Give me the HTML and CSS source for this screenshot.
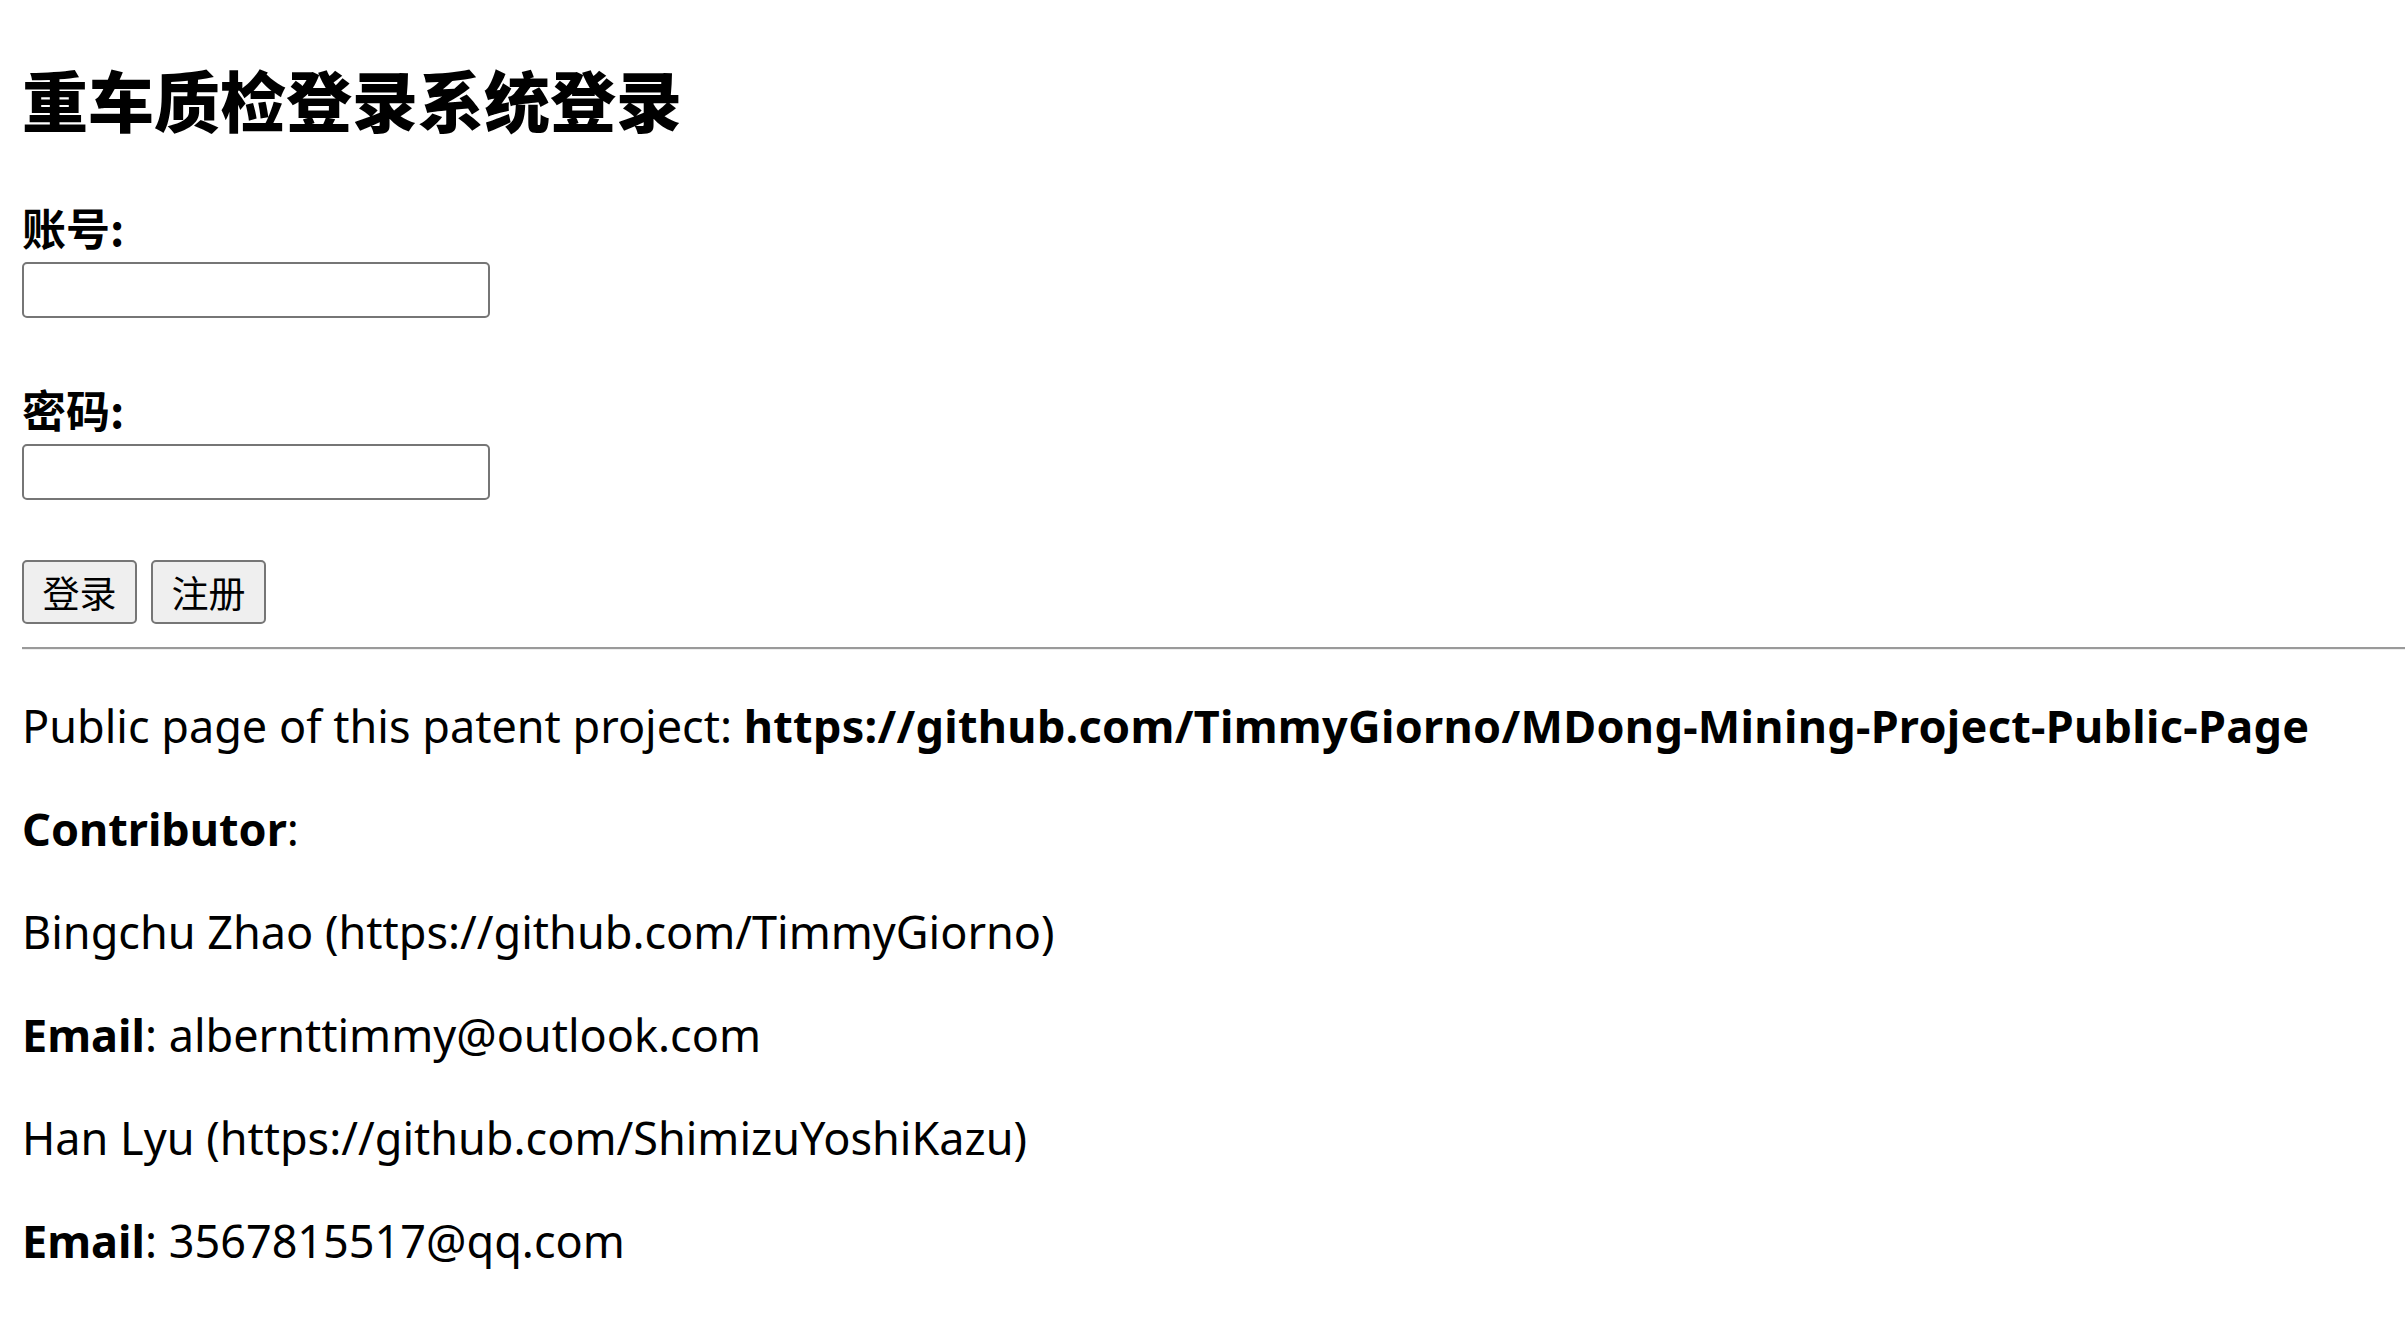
FILE: index.html
```html
<!DOCTYPE html>
<html lang="zh-CN">
<head>
<meta charset="utf-8">
<title>重车质检登录系统登录</title>
<link rel="stylesheet" href="styles.css">
</head>
<body>
<h2 class="title">重车质检登录系统登录</h2>
<form class="login-form">
  <label class="field-label" for="account">账号:</label>
  <input class="text-input" id="account" type="text">
  <label class="field-label second" for="password">密码:</label>
  <input class="text-input" id="password" type="password">
  <div class="actions">
    <button class="btn" type="button">登录</button>
    <button class="btn" type="button">注册</button>
  </div>
</form>
<hr class="divider">
<p class="info">Public page of this patent project: <b class="link">https://github.com/TimmyGiorno/MDong-Mining-Project-Public-Page</b></p>
<p class="info"><b>Contributor</b>:</p>
<p class="info">Bingchu Zhao (https://github.com/TimmyGiorno)</p>
<p class="info"><b>Email</b>: albernttimmy@outlook.com</p>
<p class="info">Han Lyu (https://github.com/ShimizuYoshiKazu)</p>
<p class="info"><b>Email</b>: 3567815517@qq.com</p>
</body>
</html>
```

FILE: styles.css
```css
html, body {
  background: #ffffff;
}
body {
  margin: 0 0 22px 22px;
  padding-top: 1px;
  font-family: "Noto Sans", "Noto Sans CJK SC", sans-serif;
  font-size: 45px;
  line-height: 58px;
  color: #000000;
}
.title {
  font-family: "Noto Sans CJK SC", sans-serif;
  font-weight: 900;
  font-size: 66px;
  line-height: 88px;
  margin: 53px 0 56px 0;
}
.login-form {
  display: flex;
  flex-direction: column;
  align-items: flex-start;
}
.field-label {
  font-family: "Noto Sans CJK SC", sans-serif;
  font-weight: 700;
  font-size: 44px;
  line-height: 58px;
  margin-bottom: 6px;
}
.field-label.second {
  margin-top: 62px;
}
.text-input {
  box-sizing: border-box;
  width: 468px;
  height: 56px;
  border: 2px solid #767676;
  border-radius: 5px;
  background: #ffffff;
  margin: 0;
}
.actions {
  display: flex;
  gap: 14px;
  margin-top: 60px;
}
.btn {
  box-sizing: border-box;
  width: 115px;
  height: 64px;
  padding: 0;
  border: 2px solid #767676;
  border-radius: 5px;
  background: #efefef;
  font-family: "Noto Sans CJK SC", sans-serif;
  font-size: 37px;
  line-height: 48px;
  color: #000000;
}
.divider {
  margin: 23px 0 0 0;
  height: 0;
  border: 0;
  border-top: 2px solid #9a9a9a;
  border-bottom: 1px solid #eeeeee;
}
.info {
  margin: 45px 0 45px 0;
}
.info:first-of-type {
  margin-top: 47px;
}
.info b {
  font-weight: 700;
}
.info .link {
  letter-spacing: 0.3px;
}
```
